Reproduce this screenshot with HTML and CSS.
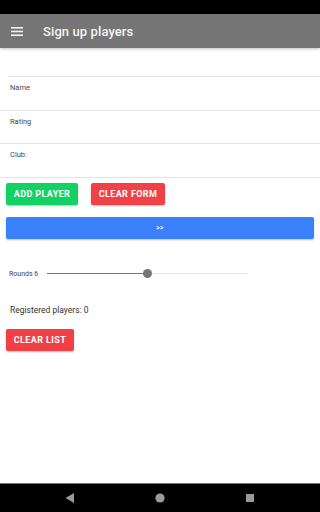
FILE: index.html
```html
<!DOCTYPE html>
<html lang="en">
<head>
    <meta charset="UTF-8">
    <meta name="viewport" content="width=device-width, initial-scale=1.0">
    <title>Sign up players</title>
    <link rel="stylesheet" href="styles.css">
</head>
<body>
    <div class="status-bar"></div>

    <header class="app-bar">
        <svg class="menu-icon" width="12" height="9" viewBox="0 0 12 9">
            <rect x="0" y="0" width="12" height="1.6" fill="#f2f2f2"/>
            <rect x="0" y="3.7" width="12" height="1.6" fill="#f2f2f2"/>
            <rect x="0" y="7.4" width="12" height="1.6" fill="#f2f2f2"/>
        </svg>
        <h1>Sign up players</h1>
    </header>

    <main class="content">
        <div class="fields">
            <div class="field-top"></div>
            <div class="field">Name</div>
            <div class="field">Rating</div>
            <div class="field">Club:</div>
        </div>

        <div class="button-row">
            <button class="btn btn-green btn-add">Add player</button>
            <button class="btn btn-red btn-clear-form">Clear form</button>
        </div>

        <button class="btn btn-blue btn-next">&gt;&gt;</button>

        <div class="rounds">
            <span class="rounds-label">Rounds 6</span>
            <div class="slider">
                <div class="slider-fill" style="width: 50%"></div>
                <div class="slider-thumb" style="left: 50%"></div>
            </div>
        </div>

        <p class="registered">Registered players: 0</p>

        <button class="btn btn-red btn-clear-list">Clear list</button>
    </main>

    <nav class="nav-bar">
        <svg width="10" height="10" viewBox="0 0 10 10">
            <polygon points="9,0 9,10 0.5,5" fill="#9a9a9a"/>
        </svg>
        <svg width="10" height="10" viewBox="0 0 10 10">
            <circle cx="5" cy="5" r="4.6" fill="#9a9a9a"/>
        </svg>
        <svg width="10" height="10" viewBox="0 0 10 10">
            <rect x="1" y="1" width="8" height="8" fill="#9a9a9a"/>
        </svg>
    </nav>
</body>
</html>
```

FILE: styles.css
```css
:root {
    --bar-gray: #757575;
    --green: #12d263;
    --red: #ef4146;
    --blue: #3b80fb;
    --line: #e4e4e4;
    --label: #4a4a4a;
}

* {
    box-sizing: border-box;
}

body {
    margin: 0;
    width: 320px;
    height: 512px;
    display: flex;
    flex-direction: column;
    font-family: Roboto, 'Liberation Sans', sans-serif;
    background-color: white;
    overflow: hidden;
}

.status-bar {
    height: 14px;
    background-color: #000;
}

.app-bar {
    height: 34px;
    background-color: var(--bar-gray);
    display: flex;
    align-items: center;
    padding-left: 11px;
    box-shadow: 0 1px 3px rgba(0, 0, 0, 0.25);
    position: relative;
    z-index: 1;
}

.menu-icon {
    margin-right: 20px;
}

.app-bar h1 {
    margin: 0;
    font-size: 13px;
    font-weight: 500;
    color: #f4f4f4;
    letter-spacing: 0.1px;
}

.content {
    flex: 1;
    display: flex;
    flex-direction: column;
}

.fields {
    margin-top: 28px;
}

.field-top {
    margin-left: 9px;
    border-top: 1px solid var(--line);
}

.field {
    height: 33.5px;
    padding: 6px 10px 0;
    font-size: 7.5px;
    line-height: 9px;
    color: var(--label);
    border-bottom: 1px solid var(--line);
}

.button-row {
    display: flex;
    gap: 13px;
    padding: 0 6px;
    margin-top: 5px;
}

.btn {
    height: 22px;
    border: none;
    border-radius: 2px;
    font-family: Roboto, 'Liberation Sans', sans-serif;
    font-size: 9px;
    font-weight: bold;
    letter-spacing: 0.4px;
    text-transform: uppercase;
    color: white;
    padding: 0;
    box-shadow: 0 1px 2px rgba(0, 0, 0, 0.25);
}

.btn-green {
    background-color: var(--green);
}

.btn-red {
    background-color: var(--red);
}

.btn-blue {
    background-color: var(--blue);
}

.btn-add {
    width: 72px;
}

.btn-clear-form {
    width: 74px;
}

.btn-next {
    margin: 12px 6px 0;
    font-size: 6.5px;
}

.rounds {
    display: flex;
    align-items: center;
    margin-top: 30px;
    padding-left: 9px;
    height: 10px;
}

.rounds-label {
    font-size: 7px;
    color: #444;
    width: 38px;
}

.slider {
    position: relative;
    width: 201px;
    height: 1.5px;
    background-color: #c4f0f8;
}

.slider-fill {
    height: 100%;
    background-color: var(--bar-gray);
}

.slider-thumb {
    position: absolute;
    top: 50%;
    width: 9px;
    height: 9px;
    margin: -4.5px 0 0 -4.5px;
    border-radius: 50%;
    background-color: var(--bar-gray);
}

.registered {
    margin: 26px 0 0 10px;
    font-size: 8.5px;
    line-height: 10px;
    color: #333;
}

.btn-clear-list {
    width: 68px;
    margin: 14px 0 0 6px;
}

.nav-bar {
    height: 29px;
    background-color: #000;
    border-top: 1px solid #777;
    display: flex;
    align-items: center;
    justify-content: center;
    gap: 80px;
}
```
